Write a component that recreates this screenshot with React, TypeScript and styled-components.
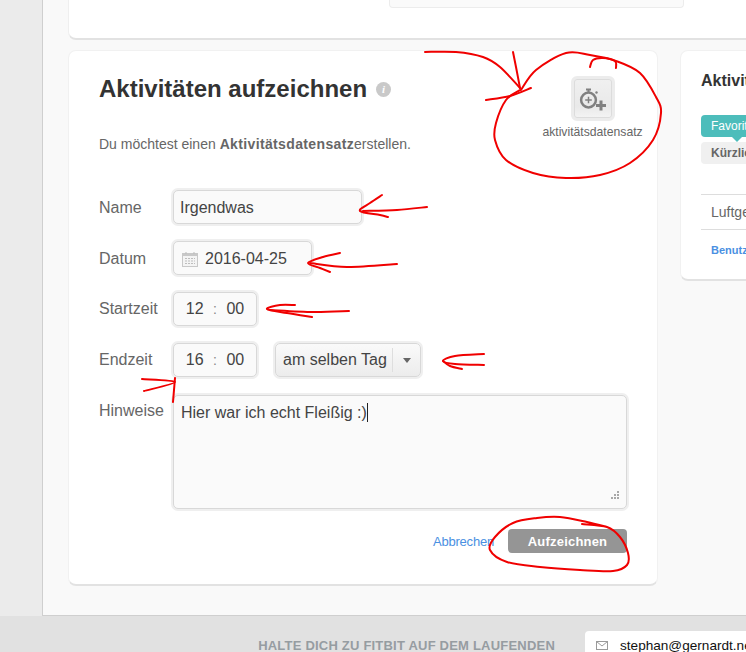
import React from "react";
import styled, { createGlobalStyle } from "styled-components";

const Global = createGlobalStyle`
  html, body { margin: 0; padding: 0; background: #e1e1e1; }
  body { font-family: "Liberation Sans", Arial, sans-serif; }
  * { box-sizing: border-box; }
`;

const Page = styled.div`
  position: relative;
  width: 746px;
  height: 652px;
  overflow: hidden;
  display: flex;
  flex-direction: column;
`;
const Upper = styled.div`
  display: flex;
  height: 616px;
  flex-shrink: 0;
  background: #ebebeb;
`;
const Gutter = styled.div`
  width: 42px;
  flex-shrink: 0;
`;
const Content = styled.main`
  flex: 1;
  min-width: 0;
  overflow: hidden;
  background: #f9f9f9;
  border-left: 1px solid #cfcfcf;
  border-bottom: 1px solid #cfcfcf;
  padding-left: 25px;
  display: flex;
  flex-direction: column;
  gap: 10px;
`;
const TopCard = styled.section`
  width: 760px;
  height: 40px;
  flex-shrink: 0;
  background: #fff;
  border-bottom: 2px solid #e2e2e2;
  border-left: 1px solid #efefef;
  border-radius: 0 0 0 8px;
  padding-left: 320px;
`;
const TopField = styled.div`
  width: 295px;
  height: 8px;
  background: #fafafa;
  border: 1px solid #ececec;
  border-top: 0;
  border-radius: 0 0 4px 4px;
`;
const Columns = styled.div`
  display: flex;
  gap: 22px;
  align-items: flex-start;
`;
const Card = styled.section<{ $w: number; $h: number }>`
  width: ${(p) => p.$w}px;
  height: ${(p) => p.$h}px;
  flex-shrink: 0;
  background: #fff;
  border-radius: 8px;
  border: 1px solid #f1f1f1;
  border-bottom: 2px solid #e2e2e2;
`;
const MainCard = styled(Card)`
  padding: 22px 30px 0 30px;
`;
const Head = styled.div`
  display: flex;
  justify-content: space-between;
  height: 93px;
`;
const HeadLeft = styled.div`
  display: flex;
  flex-direction: column;
`;
const TitleRow = styled.div`
  display: flex;
  align-items: center;
  gap: 9px;
  height: 32px;
`;
const Title = styled.h1`
  margin: 0;
  font-size: 24px;
  line-height: 32px;
  font-weight: 700;
  color: #333;
`;
const Info = styled.span`
  width: 15px;
  height: 15px;
  border-radius: 50%;
  background: #c9c9c9;
  color: #fff;
  font: italic 700 11px/15px "Liberation Serif", serif;
  text-align: center;
`;
const Intro = styled.p`
  margin: 29px 0 0;
  font-size: 14px;
  line-height: 20px;
  color: #666;
  b {
    font-weight: 700;
    letter-spacing: 0.36px;
  }
`;
const Tile = styled.div`
  width: 99px;
  margin: 3px -15px 0 0;
  display: flex;
  flex-direction: column;
  align-items: center;
`;
const TileIcon = styled.div`
  width: 44px;
  height: 45px;
  border-radius: 6px;
  background: linear-gradient(#f0f0f0, #e9e9e9 70%, #f4f4f4);
  border: 3px solid #ececec;
  box-shadow: inset 0 0 0 1px #dcdcdc;
  display: flex;
  align-items: center;
  justify-content: center;
`;
const TileLabel = styled.span`
  margin-top: 3px;
  font-size: 12.2px;
  line-height: 16px;
  color: #666;
  white-space: nowrap;
`;
const Form = styled.div`
  display: flex;
  flex-direction: column;
  gap: 17px;
  margin-top: 24px;
`;
const Row = styled.div`
  display: flex;
  align-items: center;
`;
const TopRow = styled(Row)`
  align-items: flex-start;
  margin-top: 1px;
`;
const Label = styled.label<{ $low?: boolean }>`
  width: 74px;
  flex-shrink: 0;
  font-size: 16px;
  line-height: 20px;
  color: #666;
  padding-top: ${(p) => (p.$low ? 2 : 0)}px;
  box-sizing: content-box;
`;
const TopLabel = styled(Label)`
  margin-top: 6px;
`;
const Field = styled.div<{ $w: number }>`
  width: ${(p) => p.$w}px;
  height: 34px;
  display: flex;
  align-items: center;
  background: #fafafa;
  border: 1px solid #d8d8d8;
  border-radius: 5px;
  box-shadow: 0 0 0 2px #efefef;
  font-size: 16px;
  color: #444;
`;
const NameField = styled(Field)`
  padding: 2px 0 0 6px;
`;
const DateField = styled(Field)`
  padding: 2px 0 0 8px;
  gap: 6px;
`;
const TimeField = styled(Field)`
  justify-content: center;
  gap: 8px;
`;
const Colon = styled.span`
  color: #888;
  font-size: 14px;
  margin: 0 1.5px;
`;
const Select = styled(Field)`
  margin-left: 18px;
  padding-left: 7px;
  background: linear-gradient(#fafafa, #ececec);
  justify-content: space-between;
`;
const Caret = styled.span`
  width: 28px;
  height: 24px;
  border-left: 1px solid #dedede;
  display: flex;
  align-items: center;
  justify-content: center;
  &::after {
    content: "";
    border-left: 4px solid transparent;
    border-right: 4px solid transparent;
    border-top: 5px solid #666;
  }
`;
const NoteArea = styled.div`
  position: relative;
  width: 454px;
  height: 114px;
  padding: 7px 7px;
  background: #fafafa;
  border: 1px solid #d8d8d8;
  border-radius: 5px;
  box-shadow: 0 0 0 2px #efefef;
  font-size: 16px;
  line-height: 20px;
  color: #444;
`;
const Cursor = styled.span`
  display: inline-block;
  width: 1px;
  height: 19px;
  background: #222;
  vertical-align: -4px;
`;
const Grip = styled.svg`
  position: absolute;
  right: 7px;
  bottom: 9px;
`;
const Actions = styled.div`
  margin-top: 20px;
  display: flex;
  justify-content: flex-end;
  align-items: center;
  gap: 14px;
`;
const Cancel = styled.a`
  font-size: 13px;
  letter-spacing: -0.2px;
  color: #4a90e2;
`;
const Submit = styled.button`
  width: 119px;
  height: 24px;
  padding: 0;
  border: 0;
  border-radius: 4px;
  background: #959595;
  color: #fff;
  font: 700 13px "Liberation Sans", Arial, sans-serif;
  letter-spacing: 0.2px;
`;
const SideCard = styled(Card)`
  padding: 20px 20px 0;
`;
const SideTitle = styled.h2`
  margin: 0;
  font-size: 16px;
  line-height: 20px;
  font-weight: 700;
  color: #333;
`;
const Tab = styled.div<{ $active?: boolean }>`
  position: relative;
  width: 120px;
  height: 22px;
  padding-left: 10px;
  font-size: 12px;
  line-height: 22px;
  border-radius: 4px;
  font-weight: ${(p) => (p.$active ? 400 : 700)};
  color: ${(p) => (p.$active ? "#fff" : "#666")};
  background: ${(p) => (p.$active ? "#4dbdbb" : "#f0f0f0")};
  ${(p) =>
    p.$active
      ? `&::after { content: ""; position: absolute; left: 31px; top: 22px; border-left: 5px solid transparent; border-right: 5px solid transparent; border-top: 5px solid #4dbdbb; }`
      : ""}
`;
const Tabs = styled.div`
  margin-top: 24px;
  display: flex;
  flex-direction: column;
  gap: 5px;
`;
const SideRow = styled.div`
  margin-top: 30px;
  height: 36px;
  border-top: 1px solid #ddd;
  border-bottom: 1px solid #ddd;
  padding-left: 10px;
  font-size: 14px;
  line-height: 34px;
  color: #666;
`;
const SideLink = styled.a`
  display: block;
  margin: 14px 0 0 10px;
  font-size: 11px;
  font-weight: 700;
  color: #4a90e2;
`;
const Footer = styled.footer`
  flex: 1;
  background: #e1e1e1;
  display: flex;
  justify-content: flex-end;
  align-items: flex-start;
  padding-top: 15px;
`;
const FooterText = styled.span`
  margin-top: 7px;
  font-size: 13px;
  font-weight: 700;
  letter-spacing: 0.21px;
  line-height: 16px;
  color: #969ca1;
  white-space: nowrap;
`;
const Email = styled.div`
  width: 161px;
  height: 40px;
  flex-shrink: 0;
  margin-left: 30px;
  padding: 7px 0 0 11px;
  display: flex;
  align-items: flex-start;
  gap: 12px;
  background: #fff;
  border-radius: 4px 0 0 0;
  font-size: 13.6px;
  line-height: 16px;
  color: #111;
  white-space: nowrap;
  overflow: hidden;
`;
const MailIcon = styled.svg`
  flex-shrink: 0;
  margin-top: 3px;
`;
const Scribble = styled.svg`
  position: absolute;
  left: 0;
  top: 0;
  pointer-events: none;
`;

type Pt = [number, number];
const smooth = (p: Pt[]) => {
  let d = `M${p[0][0]} ${p[0][1]}`;
  for (let i = 0; i < p.length - 1; i++) {
    const a = p[i - 1] || p[i];
    const b = p[i];
    const c = p[i + 1];
    const e = p[i + 2] || c;
    d += ` C${b[0] + (c[0] - a[0]) / 6} ${b[1] + (c[1] - a[1]) / 6} ${c[0] - (e[0] - b[0]) / 6} ${c[1] - (e[1] - b[1]) / 6} ${c[0]} ${c[1]}`;
  }
  return d;
};

const strokes: Pt[][] = [
  [[425, 52], [456, 52], [483, 57], [500, 67], [520, 88]],
  [[513, 52], [516, 67], [520, 88]],
  [[486, 100], [510, 96], [531, 88]],
  [[521, 90], [536, 70], [566, 53], [590, 55], [616, 61], [640, 73], [656, 97], [661, 113], [653, 140], [630, 163], [600, 175], [566, 178], [533, 173], [506, 160], [495, 140], [496, 123], [506, 100], [520, 90]],
  [[590, 67], [593, 60], [603, 58], [615, 61], [616, 68]],
  [[382, 195], [370, 203], [360, 211], [380, 215], [388, 217]],
  [[363, 211], [397, 210], [427, 207]],
  [[340, 253], [323, 257], [308, 263], [320, 268], [330, 272]],
  [[310, 263], [347, 267], [397, 264]],
  [[295, 305], [280, 305], [267, 309], [287, 313], [312, 317]],
  [[270, 310], [313, 312], [349, 311]],
  [[484, 354], [455, 356], [443, 361], [455, 364], [484, 365]],
  [[443, 361], [450, 366], [462, 369]],
  [[142, 379], [175, 382], [144, 391]],
  [[175, 378], [174, 390], [173, 402]],
  [[582, 524], [607, 527], [620, 537], [628, 553], [627, 565], [613, 571], [580, 570], [540, 567], [507, 562], [490, 550], [495, 537], [513, 523], [537, 518], [560, 517], [587, 522], [607, 527]],
];

const TimerPlus = () => (
  <svg width="30" height="26" viewBox="0 0 30 26" fill="none" stroke="#808080">
    <circle cx="10.5" cy="14" r="7.4" strokeWidth="2.5" />
    <path d="M7.2 14h6.6M10.5 10.8v6.4" strokeWidth="1.5" />
    <path d="M8 3.4h5M10.5 3.4v3" strokeWidth="2" />
    <circle cx="18.5" cy="6.5" r="1.2" fill="#808080" stroke="none" />
    <path d="M18 19.5h10M23 14.5v10" strokeWidth="3" />
  </svg>
);

const Calendar = () => (
  <svg width="17" height="17" viewBox="0 0 17 17" fill="none">
    <rect x="0.5" y="2.5" width="15" height="13" fill="#f4f4f4" stroke="#c8c8c8" />
    <rect x="1" y="3" width="14" height="2" fill="#c8c8c8" />
    <path d="M4 1v2M12 1v2" stroke="#bbb" />
    <path d="M3 7.5h10M3 10h10M3 12.5h10" stroke="#bdbdbd" strokeDasharray="2 1" />
  </svg>
);

const Mail = () => (
  <MailIcon width="12" height="9" viewBox="0 0 12 9" fill="none" stroke="#9a9a9a">
    <rect x="0.5" y="0.5" width="11" height="8" />
    <path d="M0.5 0.5 6 5l5.5-4.5" />
  </MailIcon>
);

export default function App() {
  return (
    <>
      <Global />
      <Page>
        <Upper>
          <Gutter />
          <Content>
            <TopCard>
              <TopField />
            </TopCard>
            <Columns>
              <MainCard $w={590} $h={536}>
                <Head>
                  <HeadLeft>
                    <TitleRow>
                      <Title>Aktivitäten aufzeichnen</Title>
                      <Info>i</Info>
                    </TitleRow>
                    <Intro>
                      Du möchtest einen <b>Aktivitätsdatensatz</b>erstellen.
                    </Intro>
                  </HeadLeft>
                  <Tile>
                    <TileIcon>
                      <TimerPlus />
                    </TileIcon>
                    <TileLabel>aktivitätsdatensatz</TileLabel>
                  </Tile>
                </Head>
                <Form>
                  <Row>
                    <Label $low>Name</Label>
                    <NameField $w={189}>Irgendwas</NameField>
                  </Row>
                  <Row>
                    <Label $low>Datum</Label>
                    <DateField $w={139}>
                      <Calendar />
                      2016-04-25
                    </DateField>
                  </Row>
                  <Row>
                    <Label>Startzeit</Label>
                    <TimeField $w={84}>
                      12<Colon>:</Colon>00
                    </TimeField>
                  </Row>
                  <Row>
                    <Label>Endzeit</Label>
                    <TimeField $w={84}>
                      16<Colon>:</Colon>00
                    </TimeField>
                    <Select $w={146}>
                      am selben Tag
                      <Caret />
                    </Select>
                  </Row>
                  <TopRow>
                    <TopLabel>Hinweise</TopLabel>
                    <NoteArea>
                      Hier war ich echt Fleißig :)
                      <Cursor />
                      <Grip width="8" height="8" viewBox="0 0 8 8" fill="#a8a8a8">
                        <rect x="6" y="0" width="2" height="2" />
                        <rect x="3" y="3" width="2" height="2" />
                        <rect x="6" y="3" width="2" height="2" />
                        <rect x="0" y="6" width="2" height="2" />
                        <rect x="3" y="6" width="2" height="2" />
                        <rect x="6" y="6" width="2" height="2" />
                      </Grip>
                    </NoteArea>
                  </TopRow>
                </Form>
                <Actions>
                  <Cancel>Abbrechen</Cancel>
                  <Submit>Aufzeichnen</Submit>
                </Actions>
              </MainCard>
              <SideCard $w={300} $h={231}>
                <SideTitle>Aktivitäten</SideTitle>
                <Tabs>
                  <Tab $active>Favoriten</Tab>
                  <Tab>Kürzlich</Tab>
                </Tabs>
                <SideRow>Luftgetrocknet</SideRow>
                <SideLink>Benutzerdefiniert</SideLink>
              </SideCard>
            </Columns>
          </Content>
        </Upper>
        <Footer>
          <FooterText>HALTE DICH ZU FITBIT AUF DEM LAUFENDEN</FooterText>
          <Email>
            <Mail />
            stephan@gernardt.net
          </Email>
        </Footer>
        <Scribble width="746" height="652" viewBox="0 0 746 652" fill="none" stroke="#f00000" strokeWidth="2" strokeLinecap="round" strokeLinejoin="round">
          {strokes.map((s, i) => (
            <path key={i} d={smooth(s)} />
          ))}
        </Scribble>
      </Page>
    </>
  );
}
